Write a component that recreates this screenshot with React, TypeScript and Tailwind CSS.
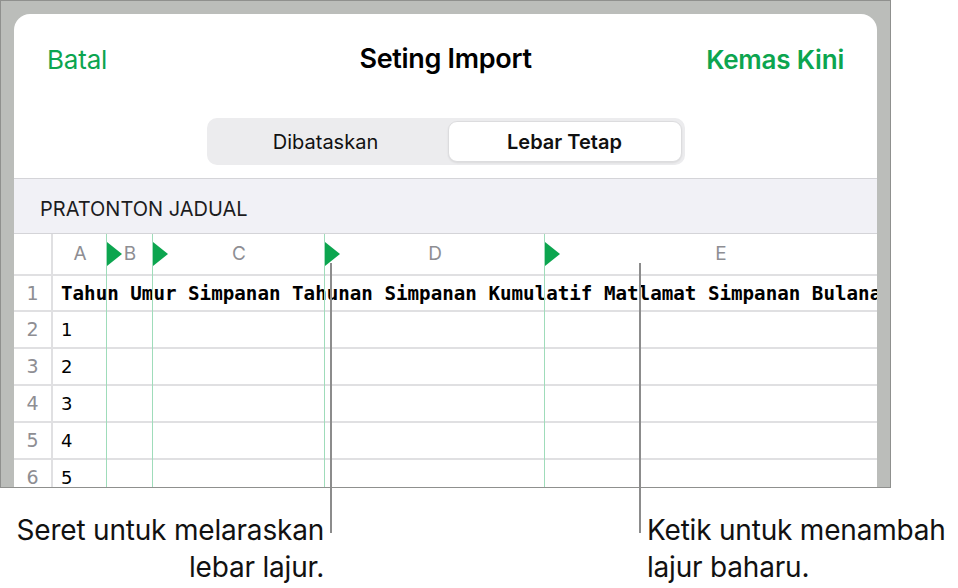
const columns = [
  { letter: "A", width: "w-[54px]", marker: false },
  { letter: "B", width: "w-[46px]", marker: true },
  { letter: "C", width: "w-[172px]", marker: true },
  { letter: "D", width: "w-[220px]", marker: true },
  { letter: "E", width: "w-[352px]", marker: true },
];

const rows = ["1", "2", "3", "4", "5"];

function Marker() {
  return (
    <svg
      className="absolute left-0 top-[8px]"
      width="16"
      height="24"
      viewBox="0 0 16 24"
    >
      <polygon points="0,0 15,12 0,24" fill="#0ca54f" />
    </svg>
  );
}

export default function App() {
  return (
    <div className="relative w-[958px] h-[588px] bg-white overflow-hidden font-['Inter',sans-serif]">
      {/* screenshot frame */}
      <div className="w-[891px] h-[488px] bg-[#bbbdba] border-t border-l border-r border-b border-[#8f908e] pt-[13px] px-[13px]">
        <div className="h-full bg-white rounded-t-[16px] flex flex-col overflow-hidden">
          {/* nav bar */}
          <div className="h-[92px] shrink-0 grid grid-cols-[1fr_auto_1fr] items-center px-[33px] pb-[2px]">
            <span className="text-[26px] text-[#0ca54f] tracking-[-0.2px]">
              Batal
            </span>
            <span className="text-[27px] font-semibold text-black tracking-[-0.3px]">
              Seting Import
            </span>
            <span className="text-[26px] font-semibold text-[#0ca54f] tracking-[-0.2px] text-right">
              Kemas Kini
            </span>
          </div>

          {/* segmented control */}
          <div className="pt-[12px] pb-[13px] flex justify-center">
            <div className="w-[478px] h-[47px] bg-[#ececee] rounded-[10px] p-[3px] flex">
              <div className="flex-1 flex items-center justify-center text-[20px] text-[#111] pr-[6px]">
                Dibataskan
              </div>
              <div className="w-[234px] flex items-center justify-center bg-white rounded-[9px] border border-[#dcdcde] shadow-[0_1px_2px_rgba(0,0,0,0.08)] text-[20px] font-semibold text-[#111]">
                Lebar Tetap
              </div>
            </div>
          </div>

          {/* table preview */}
          <div className="border-t border-[#d4d4d8] h-[56px] shrink-0 bg-[#f1f1f6] border-b flex items-center pl-[26px] pt-[6px] text-[20px] text-[#1c1c1e]">
            PRATONTON JADUAL
          </div>

          <div className="relative flex-1 overflow-hidden">
            {/* column header */}
            <div className="flex h-[42px] border-b-2 border-[#e0e0e2]">
              <div className="w-[39px] shrink-0 border-r-2 border-[#e0e0e2]" />
              {columns.map((c) => (
                <div
                  key={c.letter}
                  className={`${c.width} shrink-0 relative flex items-center justify-center text-[19px] text-[#8e8e93]`}
                >
                  {c.marker && <Marker />}
                  {c.letter}
                </div>
              ))}
            </div>

            {/* header data row */}
            <div className="flex h-[36px] border-b-2 border-[#e0e0e2]">
              <div className="w-[39px] shrink-0 border-r-2 border-[#e0e0e2] flex items-center justify-center text-[19px] text-[#8e8e93] font-['DejaVu_Sans',sans-serif]">
                1
              </div>
              <div className="pl-[8px] pt-[3px] flex items-center whitespace-nowrap font-['DejaVu_Sans_Mono',monospace] font-bold text-[19.2px] text-black">
                Tahun Umur Simpanan Tahunan Simpanan Kumulatif Matlamat Simpanan Bulanan
              </div>
            </div>

            {rows.map((r, i) => (
              <div
                key={r}
                className="flex h-[37px] border-b-2 border-[#e0e0e2]"
              >
                <div className="w-[39px] shrink-0 border-r-2 border-[#e0e0e2] flex items-center justify-center text-[19px] text-[#8e8e93] font-['DejaVu_Sans',sans-serif]">
                  {i + 2}
                </div>
                <div className="pl-[8px] flex items-center font-['DejaVu_Sans',sans-serif] text-[18px] text-black">
                  {r}
                </div>
              </div>
            ))}

            {/* column guide lines */}
            <div className="absolute top-0 bottom-0 left-[92px] w-px bg-[#9fdcba]" />
            <div className="absolute top-0 bottom-0 left-[138px] w-px bg-[#9fdcba]" />
            <div className="absolute top-0 bottom-0 left-[310px] w-px bg-[#9fdcba]" />
            <div className="absolute top-0 bottom-0 left-[530px] w-px bg-[#9fdcba]" />
          </div>
        </div>
      </div>

      {/* callout leader lines */}
      <div className="absolute left-[330px] top-[263px] h-[270px] w-[2px] bg-[#8c8c8c]" />
      <div className="absolute left-[639px] top-[263px] h-[270px] w-[2px] bg-[#8c8c8c]" />

      {/* callouts */}
      <div className="flex pt-[24px] text-[28px] leading-[37px] text-[#111] tracking-[-0.2px]">
        <div className="w-[324px] text-right">
          Seret untuk melaraskan
          <br />
          lebar lajur.
        </div>
        <div className="pl-[323px] whitespace-nowrap">
          Ketik untuk menambah
          <br />
          lajur baharu.
        </div>
      </div>
    </div>
  );
}
